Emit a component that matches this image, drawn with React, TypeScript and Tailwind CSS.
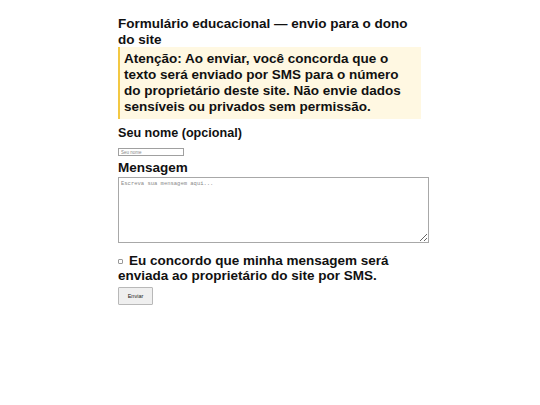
export default function App() {
  return (
    <div className="min-h-[405px] bg-white font-[family-name:'Liberation_Sans',Arial,sans-serif] text-[#111]">
      <div className="ml-[118px] w-[312px] pt-[16px]">
        <h1 className="w-[296px] text-[13.5px] font-bold leading-[15.5px]">
          Formulário educacional — envio para o dono do site
        </h1>
        <div className="w-[303px] border-l-2 border-[#f3c843] bg-[#fff8e2] py-[4px] pl-[4px] pr-[4px]">
          <p className="text-[13.5px] font-bold leading-[16px]">
            Atenção: Ao enviar, você concorda que o texto será enviado por SMS para o número do proprietário deste site. Não envie dados sensíveis ou privados sem permissão.
          </p>
        </div>
        <form className="flex flex-col">
          <label className="mt-[7px] text-[12.6px] font-bold leading-[15px]">Seu nome (opcional)</label>
          <input
            type="text"
            placeholder="Seu nome"
            className="mt-[7px] h-[8px] w-[66px] border border-[#a0a0a0] px-[2px] font-[family-name:'Liberation_Sans',Arial,sans-serif] text-[4.5px] leading-[6px] placeholder:text-[#888]"
          />
          <label className="mt-[4px] text-[13.5px] font-bold leading-[16px]">Mensagem</label>
          <textarea
            placeholder="Escreva sua mensagem aqui..."
            className="mt-[1px] h-[66px] w-[311px] resize-y border border-[#a8a8a8] px-[2px] py-[2px] font-[family-name:'Liberation_Mono',monospace] text-[5.5px] leading-[7px] placeholder:text-[#888]"
          />
          <label className="mt-[10px] text-[13.5px] font-bold leading-[15px]">
            <input
              type="checkbox"
              className="mr-[6px] inline-block h-[5px] w-[5px] appearance-none rounded-[1px] border border-[#999] bg-white align-middle"
            />
            Eu concordo que minha mensagem será enviada ao proprietário do site por SMS.
          </label>
          <div className="mt-[4px] flex">
            <button
              type="button"
              className="h-[18px] w-[35px] rounded-[1px] border border-[#b8b8b8] bg-[#efefef] font-[family-name:'Liberation_Sans',Arial,sans-serif] text-[5.5px] text-[#222]"
            >
              Enviar
            </button>
          </div>
        </form>
      </div>
    </div>
  );
}
